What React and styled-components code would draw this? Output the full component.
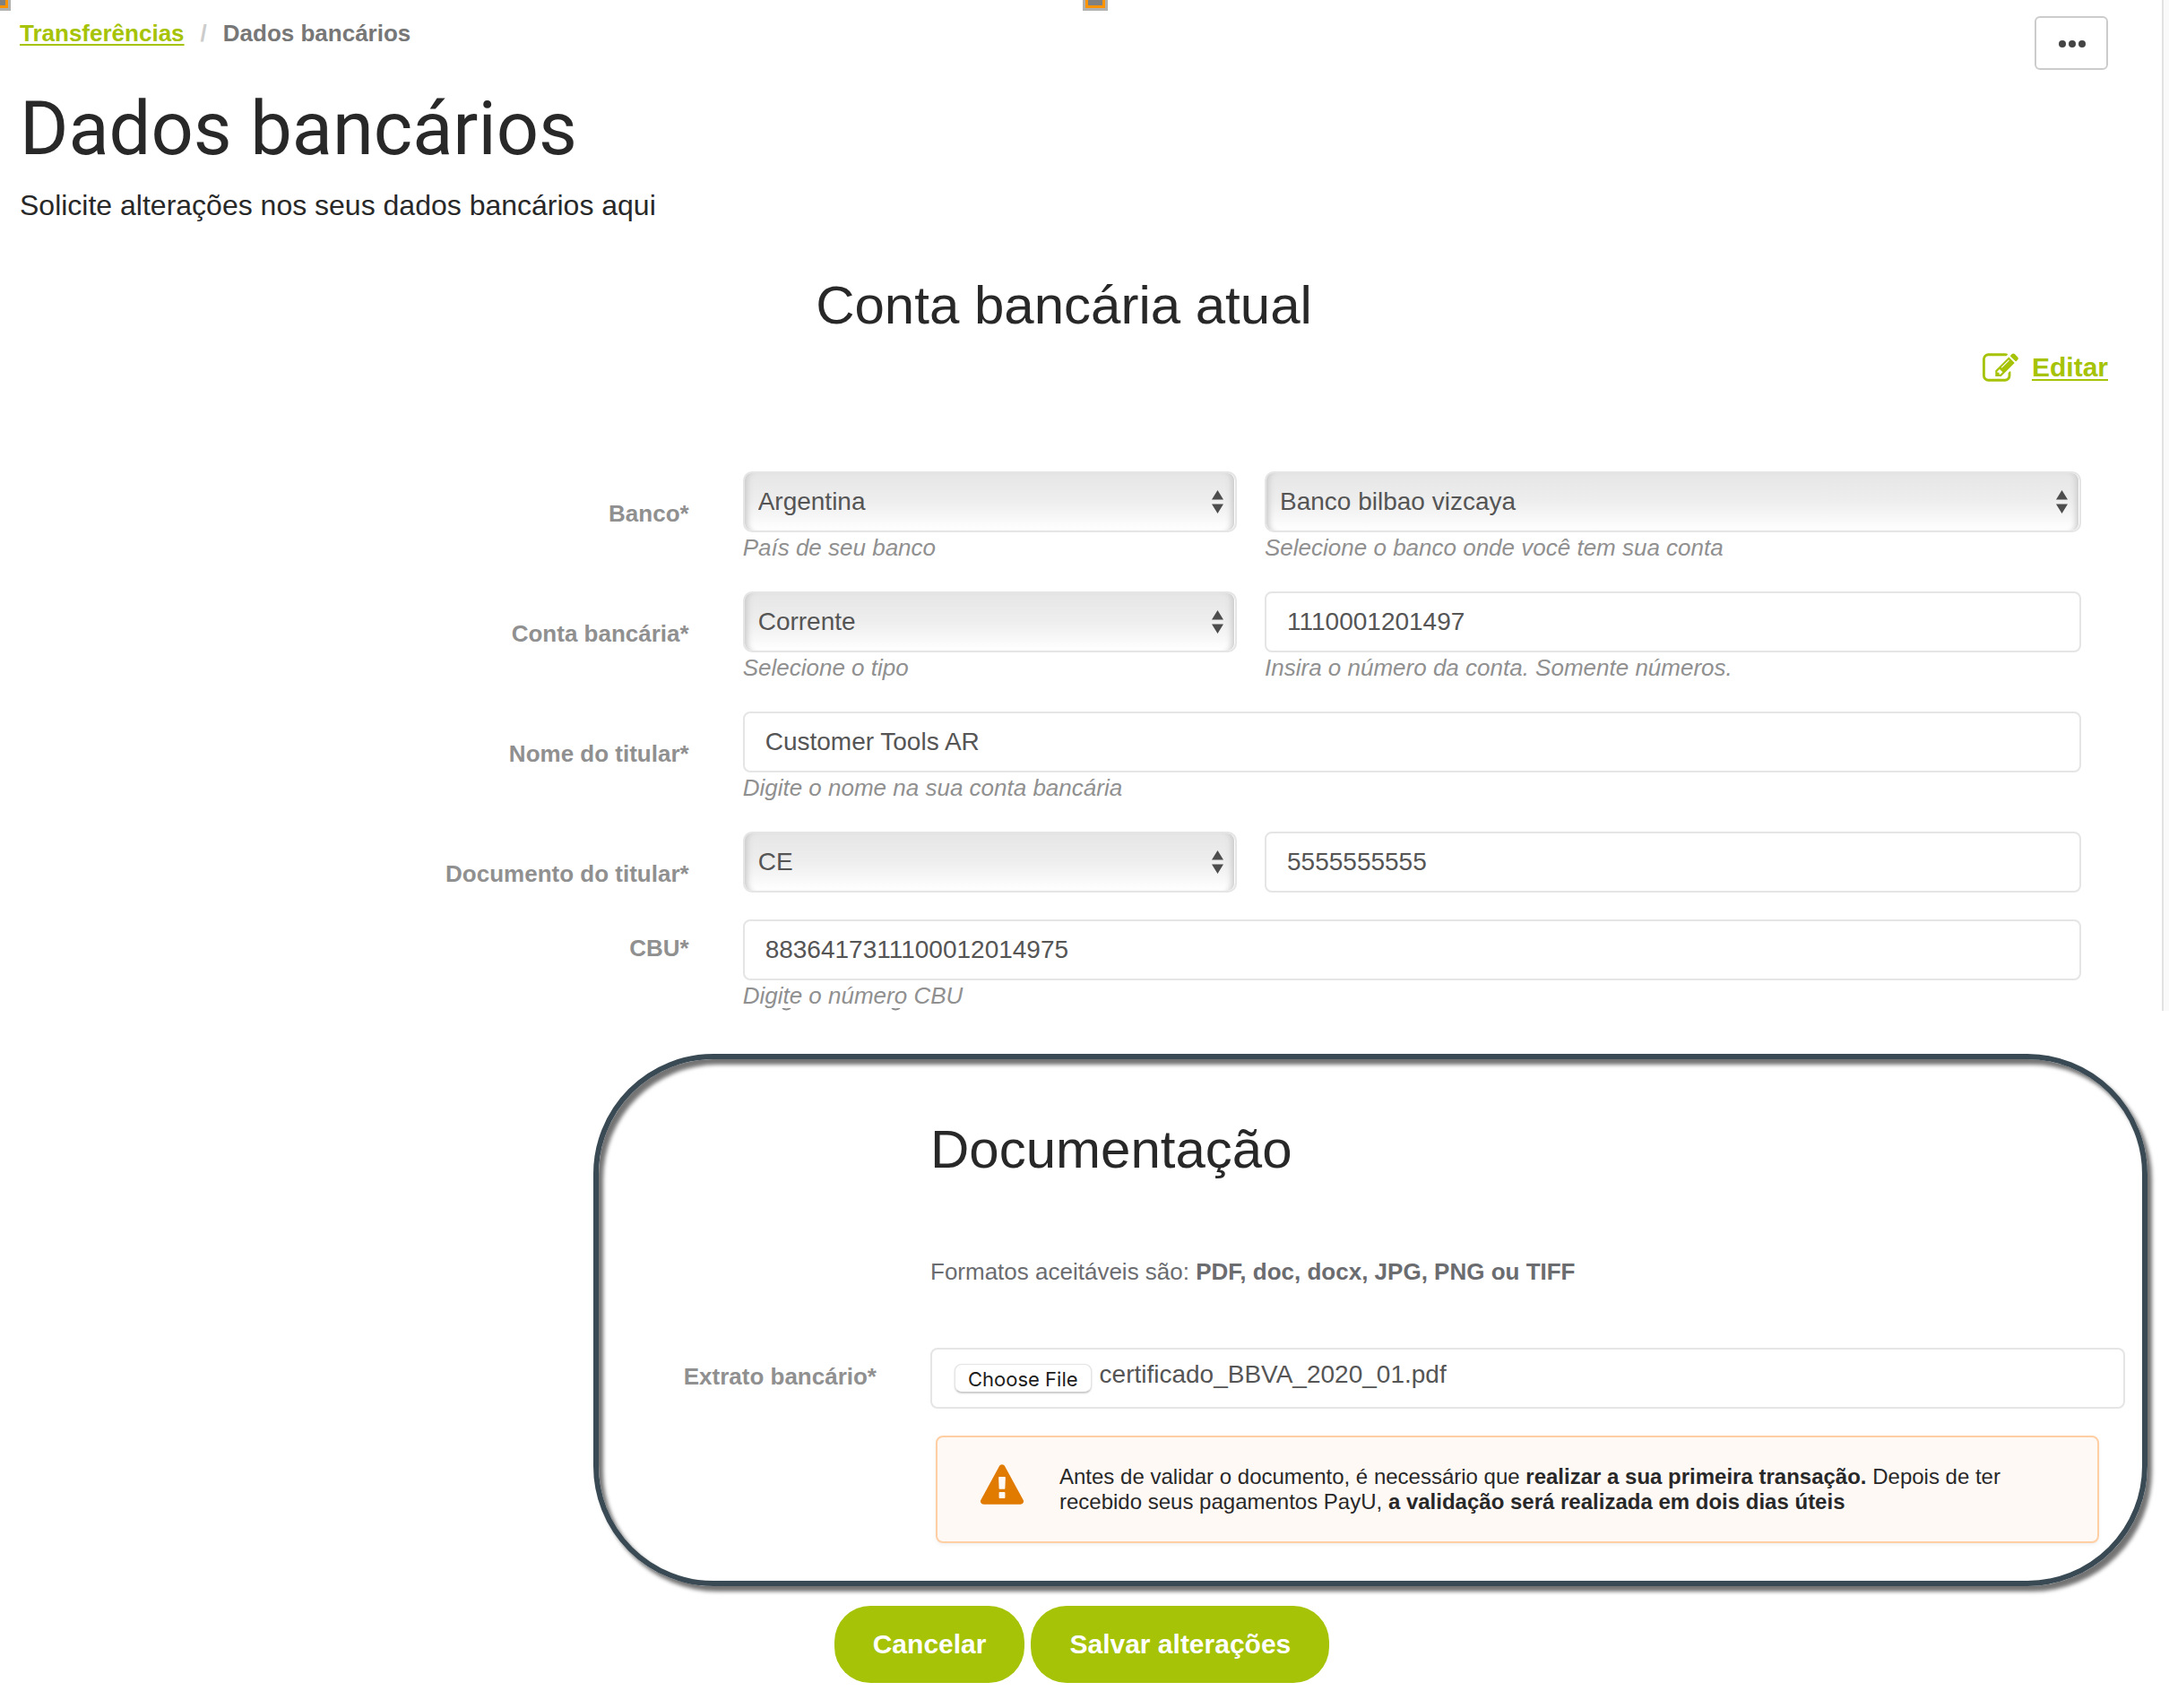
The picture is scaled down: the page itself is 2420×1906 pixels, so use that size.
import React, { useRef } from "react";
import styled, { createGlobalStyle } from "styled-components";

const sans = '"Liberation Sans", Arial, sans-serif';
const lime = "#a6c307";

const GlobalStyle = createGlobalStyle`
  *, *::before, *::after { box-sizing: border-box; }
  body { margin: 0; background: #fff; color: #282828; font-family: ${sans}; }
  h1, h2, p { margin: 0; font-weight: 400; }
  button, input, select { font-family: inherit; }
`;

const Page = styled.main`
  position: relative;
  display: flex;
  flex-direction: column;
  overflow: hidden;
`;

/* Selection handles that hang from the top edge of the page */
const Handle = styled.span`
  position: absolute;
  top: -16px;
  left: ${(p) => p.$left};
  width: 28px;
  height: 28px;
  margin-left: -16px;
  background: #808080;
  border: 3px solid #b0b0b0;
  box-shadow: inset 0 0 0 3px #ff9300;
`;

const Panel = styled.section`
  display: flex;
  flex-direction: column;
  margin-right: 6px;
  padding: 18px 60px 0 22px;
  border-right: 2px solid #e2e2e2;
  box-shadow: 6px 0 0 #fafafa;
`;

const Header = styled.header`
  display: flex;
  justify-content: space-between;
  align-items: flex-start;
`;

const Headings = styled.div`
  display: flex;
  flex-direction: column;
`;

const Breadcrumb = styled.nav`
  display: flex;
  gap: 18px;
  font-size: 26px;
  line-height: 38px;
  font-weight: 700;
  color: #777;
`;

const Separator = styled.span`
  color: #ccc;
`;

const TextLink = styled.a`
  color: ${lime};
  font-weight: 700;
  text-decoration: underline;
  text-decoration-thickness: 2px;
  text-underline-offset: 3px;
  text-decoration-skip-ink: none;
`;

const MoreButton = styled.button`
  display: flex;
  align-items: center;
  justify-content: center;
  width: 82px;
  height: 60px;
  padding: 2px 0 0 2px;
  background: #fff;
  border: 2px solid #ccc;
  border-radius: 6px;
`;

const Title = styled.h1`
  margin-top: 40px;
  font-family: Roboto, ${sans};
  font-size: 83px;
  line-height: 96px;
`;

const Lead = styled.p`
  margin-top: 18px;
  font-size: 32px;
  line-height: 38px;
`;

const SectionTitle = styled.h2`
  font-size: 60px;
  line-height: 68px;
`;

const AccountTitle = styled(SectionTitle)`
  margin-top: 59px;
  text-align: center;
`;

const EditBar = styled.div`
  display: flex;
  justify-content: flex-end;
  align-items: center;
  gap: 15px;
  margin: 17px 0 98px;
  font-size: 30px;
  line-height: 36px;
`;

const Row = styled.div`
  display: grid;
  grid-template-columns: 1fr 2fr;
  margin-bottom: ${(p) => (p.$compact ? "30px" : "32px")};

  &:last-child {
    margin-bottom: 0;
  }
`;

const Label = styled.label`
  padding: ${(p) => (p.$high ? "17px" : "32px")} 30px 0 0;
  font-size: 26px;
  line-height: 30px;
  font-weight: 700;
  text-align: right;
  color: #909090;
`;

const Fields = styled.div`
  display: grid;
  grid-template-columns: ${(p) => (p.$single ? "1fr" : "23fr 38fr")};
  gap: 31px;
  padding: 0 30px;
`;

const Field = styled.div`
  position: relative;
  display: flex;
  flex-direction: column;
`;

const Hint = styled.span`
  font-size: 26px;
  line-height: 34px;
  font-style: italic;
  color: #909090;
`;

const TextInput = styled.input`
  width: 100%;
  height: 68px;
  padding: 0 23px;
  font-size: 28px;
  color: #555;
  background: #fff;
  border: 2px solid #e5e5e5;
  border-radius: 8px;
`;

const SelectWrap = styled.div`
  position: relative;
  display: flex;
`;

const SelectInput = styled.select`
  appearance: none;
  width: 100%;
  height: 68px;
  padding: 0 40px 2px 15px;
  font-size: 28px;
  color: #555;
  background: linear-gradient(#e6e6e6, #eee 50%, #fff);
  border: 2px solid #e5e5e5;
  border-radius: 10px;
  box-shadow: inset 8px 0 6px -5px #ccc, inset -1px 0 0 #fff, inset -9px 0 6px -5px #ccc;
`;

const Arrows = styled.svg`
  position: absolute;
  right: 15px;
  top: 21px;
  pointer-events: none;
`;

/* Tops of a clipped line of text at the lower edge of the panel */
const Remnant = styled.svg`
  position: absolute;
  left: 43px;
  top: 99px;
`;

const Callout = styled.section`
  display: grid;
  grid-template-columns: 310px 1fr;
  column-gap: 60px;
  margin: 48px 24px 0 662px;
  padding: 67px 19px 42px 0;
  border: 6px solid #3a4a54;
  border-radius: 134px;
  box-shadow: 5px 6px 4px rgba(0, 0, 0, 0.55), inset 5px 6px 4px rgba(0, 0, 0, 0.55);
`;

const Intro = styled.div`
  grid-column: 2;
`;

const Formats = styled.p`
  margin: 87px 0 70px;
  font-size: 26px;
  line-height: 30px;
  color: #6b6c6f;
`;

const CalloutLabel = styled(Label)`
  padding-right: 0;
`;

const FileBox = styled.div`
  display: flex;
  align-items: center;
  gap: 9px;
  height: 68px;
  padding: 0 25px;
  border: 2px solid #e5e5e5;
  border-radius: 8px;
`;

const FileInput = styled.input`
  display: none;
`;

const FileButton = styled.button`
  height: 32px;
  padding: 2px 14px 0;
  font-family: Inter, ${sans};
  font-size: 22px;
  line-height: 28px;
  white-space: nowrap;
  color: #1d1d1d;
  background: #fff;
  border: 1px solid #e4e4e4;
  border-bottom-color: #c8c8c8;
  border-radius: 8px;
  box-shadow: 0 1px 2px rgba(0, 0, 0, 0.2);
`;

const FileName = styled.span`
  padding-bottom: 8px;
  font-size: 28px;
  line-height: 32px;
  color: #555;
`;

const Alert = styled.div`
  grid-column: 2;
  display: flex;
  align-items: flex-start;
  gap: 40px;
  margin: 30px 29px 0 6px;
  padding: 30px 48px;
  font-size: 24px;
  line-height: 28px;
  background: #fff9f5;
  border: 2px solid #ffcfa3;
  border-radius: 8px;
  box-shadow: 0 2px 4px rgba(0, 0, 0, 0.06);

  svg { flex: none; }
`;

const Actions = styled.div`
  display: flex;
  justify-content: center;
  gap: 7px;
  margin-right: 6px;
  padding: 22px 0 24px;
`;

const PillButton = styled.button`
  height: 86px;
  padding: 0 43px;
  font-size: 30px;
  font-weight: 700;
  color: #fff;
  background: ${lime};
  border: 0;
  border-radius: 40px;
`;

function Select({ id, value, label }) {
  return (
    <SelectWrap>
      <SelectInput id={id} defaultValue={value} aria-label={label}>
        <option>{value}</option>
      </SelectInput>
      <Arrows width="13" height="26" viewBox="0 0 13 26" fill="#4d4d4d" aria-hidden="true">
        <path d="M6.5 0L13 10.500H0zM6.500 26L0 15.500h13z" />
      </Arrows>
    </SelectWrap>
  );
}

function EditIcon() {
  return (
    <svg width="40" height="32" viewBox="0 128 1792 1408" fill={lime} aria-hidden="true">
      <path d="M888 1184l116-116-152-152-116 116v56h96v96h56zm440-720q-16-16-33 1l-350 350q-17 17-1 33t33-1l350-350q17-17 1-33zm80 594v190q0 119-84.5 203.5t-203.5 84.5h-832q-119 0-203.5-84.5t-84.5-203.5v-832q0-119 84.5-203.5t203.5-84.5h832q63 0 117 25 15 7 18 23 3 17-9 29l-49 49q-14 14-32 8-23-6-45-6h-832q-66 0-113 47t-47 113v832q0 66 47 113t113 47h832q66 0 113-47t47-113v-126q0-13 9-22l64-64q15-15 35-7t20 29zm-96-738l288 288-672 672h-288v-288zm444 132l-92 92-288-288 92-92q28-28 68-28t68 28l152 152q28 28 28 68t-28 68z" />
    </svg>
  );
}

function WarningIcon() {
  return (
    <svg width="48" height="46" viewBox="0 0 1792 1700" fill="#e07b00" aria-hidden="true">
      <path d="M1024 1375v-190q0-14-9.5-23.5t-22.5-9.5h-192q-13 0-22.5 9.5t-9.5 23.5v190q0 14 9.5 23.5t22.5 9.5h192q13 0 22.5-9.5t9.5-23.5zm-2-374l18-459q0-12-10-19-13-11-24-11h-220q-11 0-24 11-10 7-10 21l17 457q0 10 10 16.5t24 6.5h185q14 0 23.5-6.5t10.5-16.5zm-14-934l768 1408q35 63-2 126-17 29-46.5 46t-63.5 17h-1536q-34 0-63.5-17t-46.5-46q-37-63-2-126l768-1408q17-31 47-49t65-18 65 18 47 49z" />
    </svg>
  );
}

export default function App() {
  const fileRef = useRef(null);
  return (
    <>
      <GlobalStyle />
      <Page>
        <Handle $left="0px" />
        <Handle $left="calc(50% + 14px)" />
        <Panel>
          <Header>
            <Headings>
              <Breadcrumb aria-label="breadcrumb">
                <TextLink href="#transferencias">Transferências</TextLink>
                <Separator>/</Separator>
                <span>Dados bancários</span>
              </Breadcrumb>
              <Title>Dados bancários</Title>
              <Lead>Solicite alterações nos seus dados bancários aqui</Lead>
            </Headings>
            <MoreButton type="button" aria-label="Menu">
              <svg width="30" height="8" viewBox="0 0 30 8" fill="#444" aria-hidden="true">
                <circle cx="4" cy="4" r="4" />
                <circle cx="15" cy="4" r="4" />
                <circle cx="26" cy="4" r="4" />
              </svg>
            </MoreButton>
          </Header>
          <AccountTitle>Conta bancária atual</AccountTitle>
          <EditBar>
            <EditIcon />
            <TextLink href="#editar">Editar</TextLink>
          </EditBar>

          <form id="conta-bancaria">
            <Row>
              <Label htmlFor="pais">Banco*</Label>
              <Fields>
                <Field>
                  <Select id="pais" value="Argentina" />
                  <Hint>País de seu banco</Hint>
                </Field>
                <Field>
                  <Select id="banco" value="Banco bilbao vizcaya" label="Banco" />
                  <Hint>Selecione o banco onde você tem sua conta</Hint>
                </Field>
              </Fields>
            </Row>
            <Row>
              <Label htmlFor="conta">Conta bancária*</Label>
              <Fields>
                <Field>
                  <Select id="tipo" value="Corrente" label="Tipo" />
                  <Hint>Selecione o tipo</Hint>
                </Field>
                <Field>
                  <TextInput id="conta" defaultValue="1110001201497" />
                  <Hint>Insira o número da conta. Somente números.</Hint>
                </Field>
              </Fields>
            </Row>
            <Row>
              <Label htmlFor="titular">Nome do titular*</Label>
              <Fields $single>
                <Field>
                  <TextInput id="titular" defaultValue="Customer Tools AR" />
                  <Hint>Digite o nome na sua conta bancária</Hint>
                </Field>
              </Fields>
            </Row>
            <Row $compact>
              <Label htmlFor="documento">Documento do titular*</Label>
              <Fields>
                <Select id="tipo-documento" value="CE" label="Tipo de documento" />
                <TextInput id="documento" defaultValue="5555555555" />
              </Fields>
            </Row>
            <Row>
              <Label $high htmlFor="cbu">CBU*</Label>
              <Fields $single>
                <Field>
                  <TextInput id="cbu" defaultValue="8836417311100012014975" />
                  <Hint>Digite o número CBU</Hint>
                  <Remnant width="134" height="3" viewBox="0 0 134 3" fill="none" stroke="#8a8a8a" strokeWidth="2" aria-hidden="true">
                    <path d="M1 0q4 3 9 0M123 0q4 3 9 0" />
                  </Remnant>
                </Field>
              </Fields>
            </Row>
          </form>
        </Panel>

        <Callout>
          <Intro>
            <SectionTitle>Documentação</SectionTitle>
            <Formats>
              Formatos aceitáveis são: <strong>PDF, doc, docx, JPG, PNG ou TIFF</strong>
            </Formats>
          </Intro>
          <CalloutLabel $high htmlFor="extrato">Extrato bancário*</CalloutLabel>
          <FileBox>
            <FileInput id="extrato" type="file" ref={fileRef} />
            <FileButton type="button" onClick={() => fileRef.current.click()}>Choose File</FileButton>
            <FileName>certificado_BBVA_2020_01.pdf</FileName>
          </FileBox>
          <Alert role="alert">
            <WarningIcon />
            <p>
              Antes de validar o documento, é necessário que <strong>realizar a sua primeira transação.</strong> Depois
              de ter recebido seus pagamentos PayU, <strong>a validação será realizada em dois dias úteis</strong>
            </p>
          </Alert>
        </Callout>

        <Actions>
          <PillButton type="button">Cancelar</PillButton>
          <PillButton type="submit" form="conta-bancaria">Salvar alterações</PillButton>
        </Actions>
      </Page>
    </>
  );
}
